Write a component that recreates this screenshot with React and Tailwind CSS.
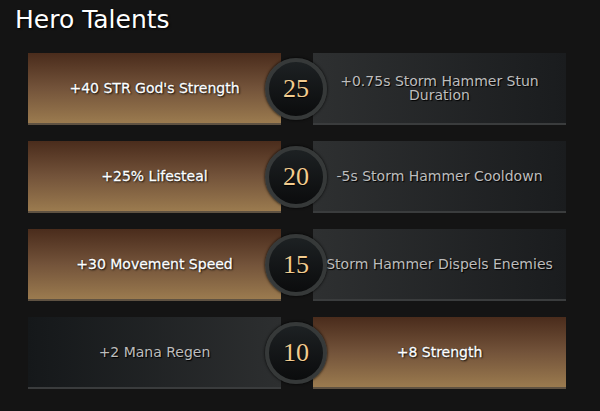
import React from 'react';

const talents = [
    { level: 25, left: '+40 STR God\'s Strength', right: '+0.75s Storm Hammer Stun Duration', pick: 'left' },
    { level: 20, left: '+25% Lifesteal', right: '-5s Storm Hammer Cooldown', pick: 'left' },
    { level: 15, left: '+30 Movement Speed', right: 'Storm Hammer Dispels Enemies', pick: 'left' },
    { level: 10, left: '+2 Mana Regen', right: '+8 Strength', pick: 'right' },
];

const TalentBox = ({ text, active, side }) => {
    // chosen talent is gold, the other one dark (lighter towards the level badge)
    const base = 'w-[253px] h-[72px] flex items-center justify-center text-center px-2 text-[14px] leading-[14px] border-b-2';
    if (active) {
        return (
            <div className={`${base} bg-gradient-to-b from-[#4a2c1c] via-[#73533a] to-[#9b7b4f] border-[#5f5242] text-white [-webkit-text-stroke:0.3px_#fff] [text-shadow:1px_1px_2px_#000,0_0_1px_#000]`}>
                {text}
            </div>
        );
    }
    return (
        <div className={`${base} ${side === 'left' ? 'bg-gradient-to-r from-[#15181a] to-[#2d2f30]' : 'bg-gradient-to-l from-[#1a1c1e] to-[#2e3031]'} border-[#3a3c3d] text-[#bdbdbd] [text-shadow:1px_1px_1px_#000]`}>
            {text}
        </div>
    );
};

const LevelBadge = ({ level }) => (
    <div className="relative z-10 -ml-[16px] -mr-[14px] w-[62px] h-[62px] shrink-0 rounded-full border-[4px] border-[#363939] bg-gradient-to-b from-[#1d2123] to-[#0b0c0d] flex items-center justify-center shadow-[0_0_3px_#000]">
        <span className="font-['Liberation_Serif',serif] text-[26px] leading-none text-[#f2cc8f] [text-shadow:0_1px_1px_#000]">{level}</span>
    </div>
);

export default function App() {
    return (
        <div className="w-[600px] h-[411px] bg-[#141414] font-['DejaVu_Sans',sans-serif] overflow-hidden">
            <h1 className="pt-[4px] pl-[15px] text-[25px] leading-[31px] text-white font-normal [text-shadow:1px_1px_2px_#000]">
                Hero Talents
            </h1>

            <div className="mt-[18px] ml-[28px] w-[538px] flex flex-col gap-[16px]">
                {talents.map((t) => (
                    <div key={t.level} className="flex items-center">
                        <TalentBox text={t.left} active={t.pick === 'left'} side="left" />
                        <LevelBadge level={t.level} />
                        <TalentBox text={t.right} active={t.pick === 'right'} side="right" />
                    </div>
                ))}
            </div>
        </div>
    );
}
